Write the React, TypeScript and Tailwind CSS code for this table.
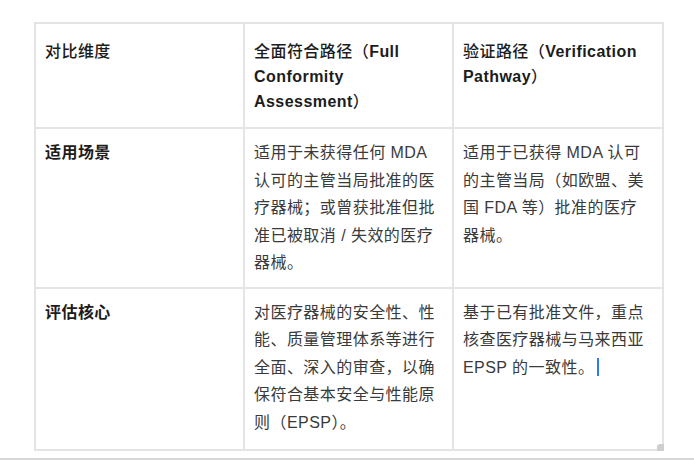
const rows = [
  {
    label: '适用场景',
    full: '适用于未获得任何 MDA 认可的主管当局批准的医疗器械；或曾获批准但批准已被取消 / 失效的医疗器械。',
    verify: '适用于已获得 MDA 认可的主管当局（如欧盟、美国 FDA 等）批准的医疗器械。',
  },
  {
    label: '评估核心',
    full: '对医疗器械的安全性、性能、质量管理体系等进行全面、深入的审查，以确保符合基本安全与性能原则（EPSP）。',
    verify: '基于已有批准文件，重点核查医疗器械与马来西亚 EPSP 的一致性。',
  },
]

function HeadCell({ children }: { children: React.ReactNode }) {
  return (
    <div className="border-r-2 border-b-2 border-[#e4e4e6] pl-[9px] pr-[9px] pt-[15px] pb-[13px] leading-[25px] text-[#1c1c1c] font-medium">
      {children}
    </div>
  )
}

export default function App() {
  return (
    <div className="w-[694px] h-[460px] bg-white border-b-2 border-[#d6d6d6] pt-[22px] pl-[34px] font-['Liberation_Sans','Noto_Sans_CJK_SC',sans-serif] text-[16px] tracking-[0.45px]">
      <div className="relative w-fit">
        <div className="grid grid-cols-[209px_209px_210px] border-l-2 border-t-2 border-[#e4e4e6]">
          {/* header */}
          <HeadCell>对比维度</HeadCell>
          <HeadCell>
            全面符合路径（<span className="font-bold">Full Conformity Assessment</span>）
          </HeadCell>
          <HeadCell>
            验证路径（<span className="font-bold">Verification Pathway</span>）
          </HeadCell>

          {rows.map((r, i) => {
            const pad = i === rows.length - 1 ? 'pt-[10px] pb-[13px]' : 'pt-[10px] pb-[10px]'
            const cell = `border-r-2 border-b-2 border-[#e4e4e6] pl-[9px] pr-[9px] leading-[27.5px] ${pad}`
            return (
              <div key={r.label} className="contents">
                <div className={`${cell} font-bold text-[#1c1c1c]`}>{r.label}</div>
                <div className={`${cell} text-[#3a3a3a]`}>{r.full}</div>
                <div className={`${cell} text-[#3a3a3a]`}>
                  {r.verify}
                  {i === rows.length - 1 && (
                    <span className="inline-block w-[2px] h-[18px] ml-[3px] align-[-3px] bg-[#2b7de9]" />
                  )}
                </div>
              </div>
            )
          })}
        </div>
        {/* resize grip */}
        <div className="absolute right-0 bottom-0 w-[7px] h-[7px] rounded-tl-[3px] bg-[#cfcfd2]" />
      </div>
    </div>
  )
}
